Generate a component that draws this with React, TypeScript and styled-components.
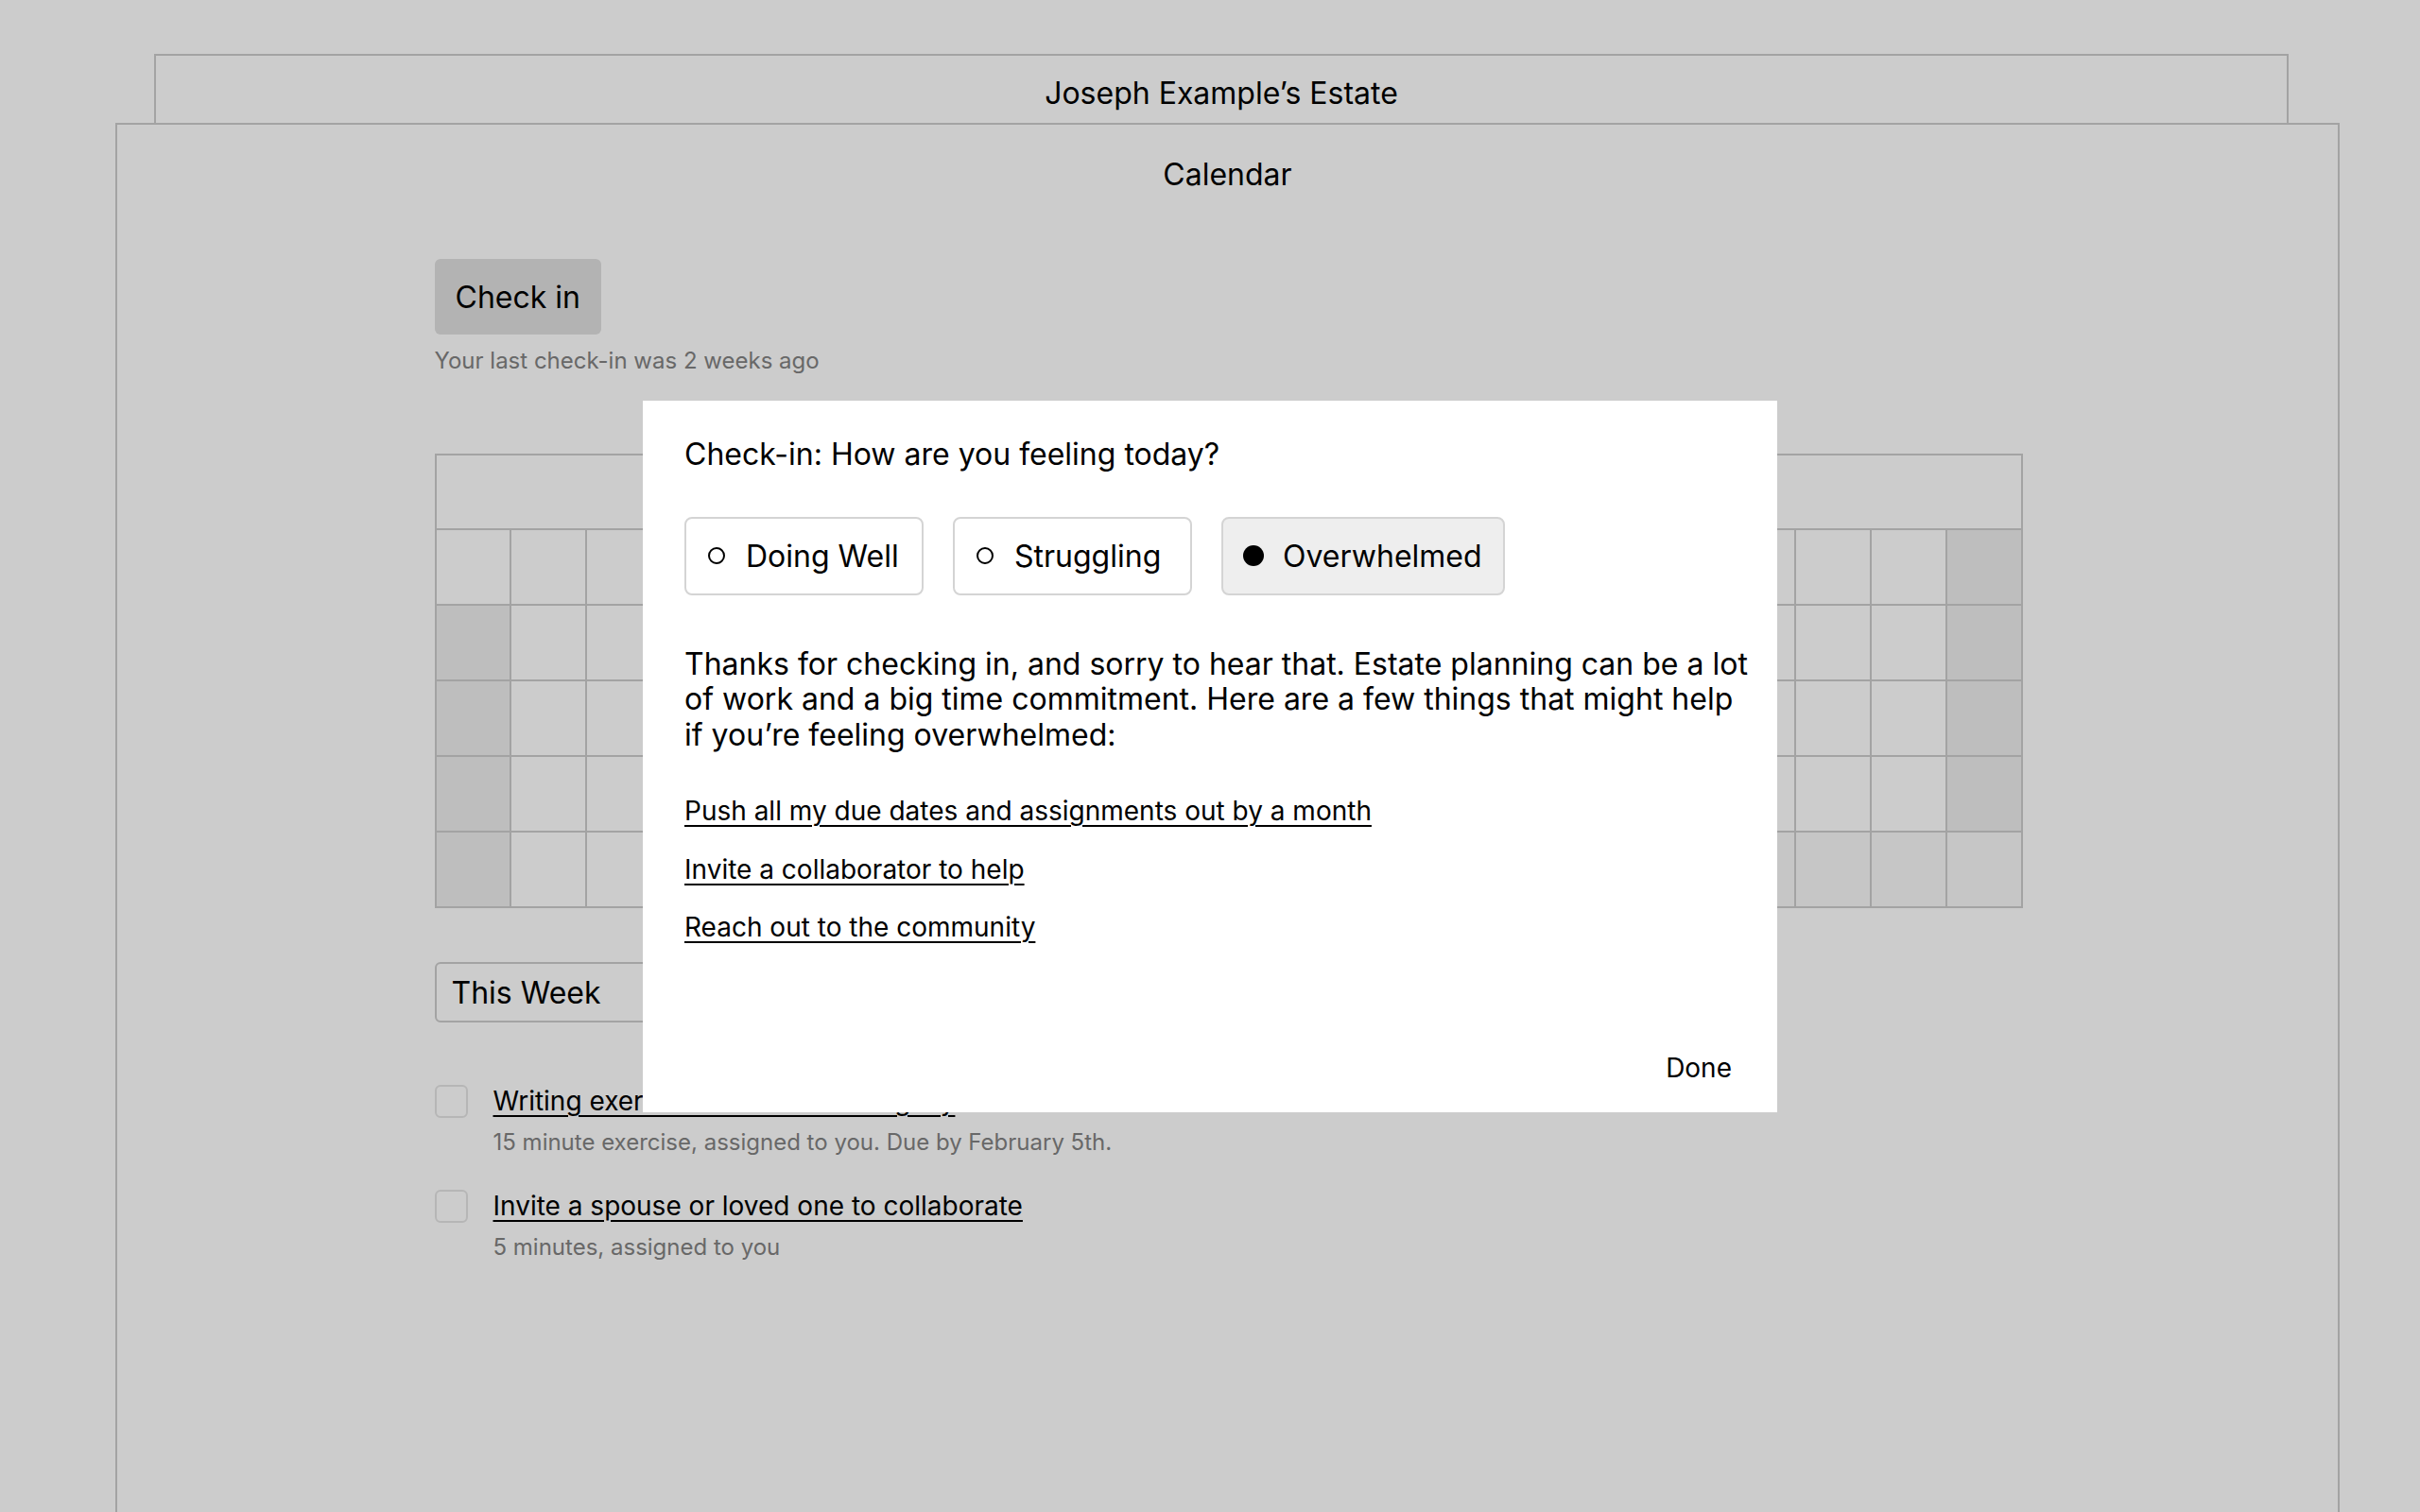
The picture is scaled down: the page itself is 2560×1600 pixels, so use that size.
import React, { useState } from 'react';
import styled, { createGlobalStyle } from 'styled-components';

const GlobalStyle = createGlobalStyle`
  html, body {
    margin: 0;
    padding: 0;
    overflow: hidden;
    background: #ffffff;
  }
  body {
    font-family: Inter, "Noto Sans", "Liberation Sans", sans-serif;
    color: #000000;
  }
  * {
    box-sizing: border-box;
  }
`;

const Page = styled.div`
  padding: 57px 85px 0 122px;
  height: 100vh;
`;

const EstateTab = styled.div`
  margin: 0 54px 0 41px;
  height: 73px;
  padding-top: 20px;
  border: 2px solid #cccccc;
  border-bottom: none;
  text-align: center;
`;

const EstateTitle = styled.h1`
  margin: 0;
  font-size: 32px;
  line-height: 40px;
  font-weight: 400;
`;

const CalendarPanel = styled.main`
  border: 2px solid #cccccc;
  height: calc(100vh - 110px);
  padding-top: 33px;
`;

const PanelTitle = styled.h2`
  margin: 0;
  text-align: center;
  font-size: 32px;
  line-height: 40px;
  font-weight: 400;
`;

const Content = styled.div`
  width: 1682px;
  margin: 69px auto 0;
  padding-left: 2px;
`;

const CheckInButton = styled.button`
  height: 80px;
  padding: 0 22px;
  border: none;
  border-radius: 6px;
  background: #e0e0e0;
  font-family: inherit;
  font-size: 32px;
  color: #000000;
  cursor: pointer;
`;

const Hint = styled.p`
  margin: 13px 0 0;
  font-size: 24px;
  line-height: 29px;
  color: #838383;
`;

const CalendarGrid = styled.div`
  margin-top: 84px;
  display: grid;
  grid-template-columns: repeat(21, 1fr);
  border-top: 2px solid #cccccc;
  border-left: 2px solid #cccccc;
`;

const GridHeader = styled.div`
  grid-column: 1 / -1;
  height: 79px;
  border-right: 2px solid #cccccc;
  border-bottom: 2px solid #cccccc;
`;

const DayCell = styled.div<{ $tone: 'plain' | 'weekend' | 'later' }>`
  height: 80px;
  border-right: 2px solid #cccccc;
  border-bottom: 2px solid #cccccc;
  background: ${(p) =>
    p.$tone === 'weekend' ? '#eeeeee' : p.$tone === 'later' ? '#f8f8f8' : '#ffffff'};
`;

const RangeSelect = styled.div`
  margin-top: 57px;
  width: 420px;
  height: 64px;
  padding-left: 16px;
  display: flex;
  align-items: center;
  border: 2px solid #cccccc;
  border-radius: 6px;
  font-size: 32px;
`;

const TaskList = styled.ul`
  list-style: none;
  margin: 66px 0 0;
  padding: 0;
  display: flex;
  flex-direction: column;
  gap: 36px;
`;

const TaskRow = styled.li`
  display: flex;
  gap: 27px;
  align-items: flex-start;
`;

const TaskCheck = styled.span`
  width: 35px;
  height: 35px;
  flex: none;
  border: 2px solid #e4e4e4;
  border-radius: 6px;
`;

const TaskBody = styled.div`
  display: flex;
  flex-direction: column;
  gap: 12px;
`;

const TaskTitle = styled.a`
  font-size: 28px;
  line-height: 34px;
  color: #000000;
  text-decoration: underline;
  text-decoration-thickness: 1.5px;
  text-underline-offset: 5px;
`;

const TaskMeta = styled.span`
  font-size: 24px;
  line-height: 29px;
  color: #838383;
`;

const Overlay = styled.div`
  position: fixed;
  inset: 0;
  background: rgba(0, 0, 0, 0.2);
  display: flex;
  align-items: center;
  justify-content: center;
`;

const Dialog = styled.div`
  width: 1200px;
  height: 753px;
  background: #ffffff;
  padding: 37px 24px 18px 44px;
  display: flex;
  flex-direction: column;
`;

const DialogTitle = styled.h3`
  margin: 0;
  font-size: 32px;
  line-height: 40px;
  font-weight: 400;
`;

const MoodRow = styled.div`
  margin-top: 46px;
  display: flex;
  gap: 31px;
`;

const MoodOption = styled.button<{ $selected: boolean }>`
  min-width: 253px;
  height: 83px;
  padding: 0 22px 0 21px;
  display: flex;
  align-items: center;
  gap: 20px;
  border: 2px solid #d4d4d4;
  border-radius: 8px;
  background: ${(p) => (p.$selected ? '#eeeeee' : '#ffffff')};
  font-family: inherit;
  font-size: 32px;
  color: #000000;
  white-space: nowrap;
  cursor: pointer;
`;

const DotSlot = styled.span`
  width: 22px;
  height: 22px;
  flex: none;
  display: flex;
  align-items: center;
  justify-content: center;
`;

const MoodDot = styled.span<{ $selected: boolean }>`
  border-radius: 50%;
  width: ${(p) => (p.$selected ? '22px' : '18px')};
  height: ${(p) => (p.$selected ? '22px' : '18px')};
  background: ${(p) => (p.$selected ? '#000000' : 'transparent')};
  border: ${(p) => (p.$selected ? 'none' : '2px solid #000000')};
`;

const Message = styled.p`
  margin: 54px 0 0;
  font-size: 32px;
  line-height: 37.5px;
`;

const SuggestionList = styled.div`
  margin-top: 45px;
  display: flex;
  flex-direction: column;
  align-items: flex-start;
  gap: 27.5px;
`;

const Suggestion = styled.a`
  font-size: 28px;
  line-height: 34px;
  color: #000000;
  text-decoration: underline;
  text-decoration-thickness: 1.5px;
  text-underline-offset: 5px;
  cursor: pointer;
`;

const DialogFooter = styled.div`
  margin-top: auto;
  display: flex;
  justify-content: flex-end;
`;

const DoneButton = styled.button`
  padding: 12px 24px;
  border: none;
  background: transparent;
  font-family: inherit;
  font-size: 28px;
  line-height: 34px;
  color: #000000;
  cursor: pointer;
`;

const moods = ['Doing Well', 'Struggling', 'Overwhelmed'];

const suggestions = [
  'Push all my due dates and assignments out by a month',
  'Invite a collaborator to help',
  'Reach out to the community',
];

const tasks = [
  {
    title: 'Writing exercise: Your life and legacy',
    meta: '15 minute exercise, assigned to you. Due by February 5th.',
  },
  {
    title: 'Invite a spouse or loved one to collaborate',
    meta: '5 minutes, assigned to you',
  },
];

// shading of the day cells, as seen in the picture
const toneFor = (row: number, col: number): 'plain' | 'weekend' | 'later' => {
  if (col === 0 && row > 0) return 'weekend';
  if (col === 20 && row < 4) return 'weekend';
  if (row === 4 && col >= 10) return 'later';
  return 'plain';
};

const App: React.FC = () => {
  const [mood, setMood] = useState('Overwhelmed');

  return (
    <>
      <GlobalStyle />
      <Page>
        <EstateTab>
          <EstateTitle>Joseph Example’s Estate</EstateTitle>
        </EstateTab>
        <CalendarPanel>
          <PanelTitle>Calendar</PanelTitle>
          <Content>
            <CheckInButton>Check in</CheckInButton>
            <Hint>Your last check-in was 2 weeks ago</Hint>

            <CalendarGrid>
              <GridHeader />
              {Array.from({ length: 5 }).map((_, row) =>
                Array.from({ length: 21 }).map((__, col) => (
                  <DayCell key={`${row}-${col}`} $tone={toneFor(row, col)} />
                ))
              )}
            </CalendarGrid>

            <RangeSelect>This Week</RangeSelect>

            <TaskList>
              {tasks.map((t) => (
                <TaskRow key={t.title}>
                  <TaskCheck />
                  <TaskBody>
                    <TaskTitle>{t.title}</TaskTitle>
                    <TaskMeta>{t.meta}</TaskMeta>
                  </TaskBody>
                </TaskRow>
              ))}
            </TaskList>
          </Content>
        </CalendarPanel>
      </Page>

      <Overlay>
        <Dialog>
          <DialogTitle>Check-in: How are you feeling today?</DialogTitle>
          <MoodRow>
            {moods.map((m) => (
              <MoodOption key={m} $selected={mood === m} onClick={() => setMood(m)}>
                <DotSlot>
                  <MoodDot $selected={mood === m} />
                </DotSlot>
                {m}
              </MoodOption>
            ))}
          </MoodRow>
          <Message>
            Thanks for checking in, and sorry to hear that. Estate planning can be a lot of work
            and a big time commitment. Here are a few things that might help if you’re feeling
            overwhelmed:
          </Message>
          <SuggestionList>
            {suggestions.map((s) => (
              <Suggestion key={s}>{s}</Suggestion>
            ))}
          </SuggestionList>
          <DialogFooter>
            <DoneButton>Done</DoneButton>
          </DialogFooter>
        </Dialog>
      </Overlay>
    </>
  );
};

export default App;
